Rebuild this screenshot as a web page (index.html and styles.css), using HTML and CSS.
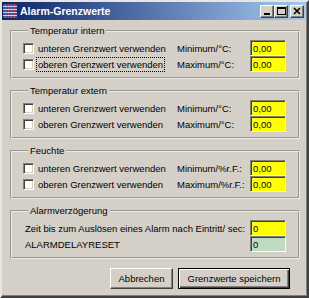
FILE: index.html
```html
<!DOCTYPE html>
<html lang="de">
<head>
<meta charset="utf-8">
<title>Alarm-Grenzwerte</title>
<link rel="stylesheet" href="styles.css">
</head>
<body>
<div class="window">
  <div class="titlebar">
    <svg class="appicon" width="14" height="14" viewBox="0 0 14 14">
      <rect x="0" y="0" width="14" height="14" fill="#3a4f9a"/>
      <g stroke="#d84030" stroke-width="1">
        <line x1="2.5" y1="0" x2="2.5" y2="14"/>
        <line x1="5.5" y1="0" x2="5.5" y2="14"/>
        <line x1="8.5" y1="0" x2="8.5" y2="14"/>
        <line x1="11.5" y1="0" x2="11.5" y2="14"/>
      </g>
      <g stroke="#c8d0f0" stroke-width="1">
        <line x1="0" y1="2.5" x2="14" y2="2.5"/>
        <line x1="0" y1="5.5" x2="14" y2="5.5"/>
        <line x1="0" y1="8.5" x2="14" y2="8.5"/>
        <line x1="0" y1="11.5" x2="14" y2="11.5"/>
      </g>
    </svg>
    <span class="title">Alarm-Grenzwerte</span>
    <div class="caption-btns">
      <span class="cbtn"><svg width="12" height="10" viewBox="0 0 12 10"><rect x="3" y="7" width="6" height="2" fill="#000"/></svg></span>
      <span class="cbtn"><svg width="12" height="10" viewBox="0 0 12 10"><rect x="2.5" y="1.5" width="8" height="7" fill="none" stroke="#000"/><rect x="2" y="1" width="9" height="2" fill="#000"/></svg></span>
      <span class="cbtn close"><svg width="12" height="10" viewBox="0 0 12 10"><path d="M3 2 L9 8 M9 2 L3 8" stroke="#000" stroke-width="1.6"/></svg></span>
    </div>
  </div>

  <div class="content">
    <fieldset class="group">
      <legend>Temperatur intern</legend>
      <div class="row">
        <span class="check"></span><span class="lbl">unteren Grenzwert verwenden</span>
        <span class="unit">Minimum/°C:</span><span class="field">0,00</span>
      </div>
      <div class="row">
        <span class="check"></span><span class="lbl"><span class="focus">oberen Grenzwert verwenden</span></span>
        <span class="unit">Maximum/°C:</span><span class="field">0,00</span>
      </div>
    </fieldset>

    <fieldset class="group">
      <legend>Temperatur extern</legend>
      <div class="row">
        <span class="check"></span><span class="lbl">unteren Grenzwert verwenden</span>
        <span class="unit">Minimum/°C:</span><span class="field">0,00</span>
      </div>
      <div class="row">
        <span class="check"></span><span class="lbl">oberen Grenzwert verwenden</span>
        <span class="unit">Maximum/°C:</span><span class="field">0,00</span>
      </div>
    </fieldset>

    <fieldset class="group">
      <legend>Feuchte</legend>
      <div class="row">
        <span class="check"></span><span class="lbl">unteren Grenzwert verwenden</span>
        <span class="unit">Minimum/%r.F.:</span><span class="field">0,00</span>
      </div>
      <div class="row">
        <span class="check"></span><span class="lbl">oberen Grenzwert verwenden</span>
        <span class="unit">Maximum/%r.F.:</span><span class="field">0,00</span>
      </div>
    </fieldset>

    <fieldset class="group">
      <legend>Alarmverzögerung</legend>
      <div class="row">
        <span class="wide">Zeit bis zum Auslösen eines Alarm nach Eintritt/ sec:</span><span class="field">0</span>
      </div>
      <div class="row">
        <span class="wide">ALARMDELAYRESET</span><span class="field green">0</span>
      </div>
    </fieldset>

    <div class="actions">
      <button class="btn cancel">Abbrechen</button>
      <button class="btn default">Grenzwerte speichern</button>
    </div>
  </div>
</div>
</body>
</html>
```

FILE: styles.css
```css
html, body {
  margin: 0;
  padding: 0;
  background: #d4d0c8;
}

body {
  font-family: "Liberation Sans", Arial, sans-serif;
  font-size: 9.5px;
  color: #000;
}

.window {
  box-sizing: border-box;
  width: 309px;
  height: 298px;
  background: #d4d0c8;
  border: 2px solid;
  border-color: #e8e6e0 #404040 #404040 #e8e6e0;
  box-shadow: inset -1px -1px 0 #808080;
  display: flex;
  flex-direction: column;
}

.titlebar {
  height: 18px;
  margin-right: 1px;
  display: flex;
  align-items: center;
  background: linear-gradient(to right, #0a246a, #a6caf0);
  color: #fff;
}

.appicon {
  margin-left: 1px;
  margin-right: 3px;
  flex: none;
}

.title {
  font-weight: bold;
  font-size: 10.5px;
  flex: 1;
}

.caption-btns {
  display: flex;
  margin-right: 2px;
}

.cbtn {
  box-sizing: border-box;
  width: 14px;
  height: 13px;
  background: #d4d0c8;
  border: 1px solid;
  border-color: #fff #404040 #404040 #fff;
  box-shadow: inset -1px -1px 0 #808080;
  display: flex;
  align-items: center;
  justify-content: center;
}

.cbtn.close {
  margin-left: 2px;
}

.content {
  flex: 1;
  padding: 5px 7px 0 8px;
  display: flex;
  flex-direction: column;
}

.group {
  margin: 0 0 6px 0;
  padding: 3px 0 5px 11px;
  border: 2px groove #ecebe6;
  min-width: 0;
}

.group legend {
  margin-left: 5px;
  padding: 0 2px;
  line-height: 12px;
}

.row {
  display: grid;
  grid-template-columns: 11px 143px 73px 36px;
  align-items: center;
  height: 16px;
}

.check {
  box-sizing: border-box;
  width: 11px;
  height: 11px;
  background: #fff;
  border: 1px solid;
  border-color: #808080 #fff #fff #808080;
  box-shadow: inset 1px 1px 0 #404040, inset -1px -1px 0 #d4d0c8;
}

.lbl {
  padding-left: 4px;
  white-space: nowrap;
}

.focus {
  outline: 1px dotted #000;
  outline-offset: 1px;
}

.unit {
  white-space: nowrap;
}

.wide {
  grid-column: 1 / 4;
  padding-left: 2px;
  white-space: nowrap;
}

.field {
  box-sizing: border-box;
  height: 16px;
  width: 36px;
  background: #ffff00;
  border: 1px solid;
  border-color: #808080 #fff #fff #808080;
  box-shadow: inset 1px 1px 0 #404040;
  padding: 1px 0 0 2px;
  line-height: 13px;
}

.field.green {
  background: #c0dcc0;
}

.actions {
  display: flex;
  justify-content: flex-end;
  gap: 5px;
  margin-top: 3px;
  padding-right: 10px;
}

.btn {
  box-sizing: border-box;
  height: 21px;
  font-family: inherit;
  font-size: 9.5px;
  color: #000;
  background: #d4d0c8;
  border: 1px solid;
  border-color: #fff #404040 #404040 #fff;
  box-shadow: inset -1px -1px 0 #808080;
  padding: 0;
}

.btn.cancel {
  width: 63px;
}

.btn.default {
  width: 112px;
  border: 1px solid #000;
  box-shadow: inset 1px 1px 0 #fff, inset -1px -1px 0 #404040, inset -2px -2px 0 #808080;
}
```
